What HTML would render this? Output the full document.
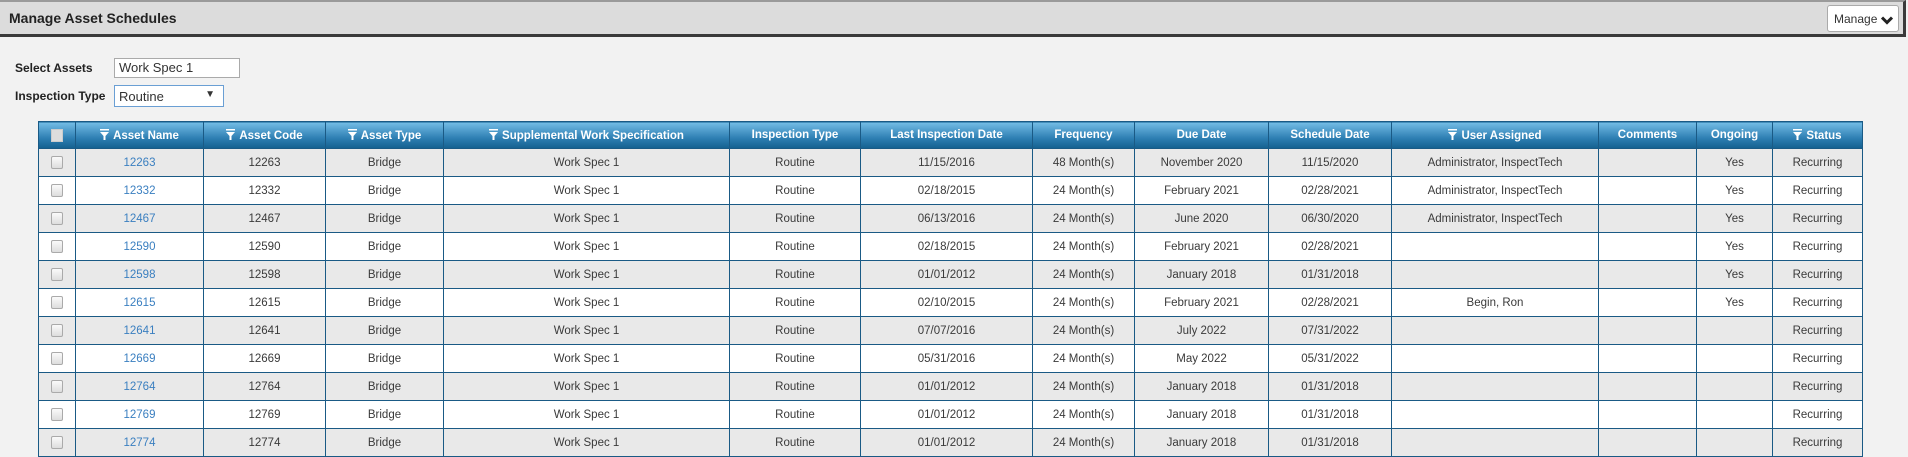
<!DOCTYPE html>
<html><head><meta charset="utf-8"><style>
*{box-sizing:border-box;margin:0;padding:0}
html,body{width:1908px;height:446px;overflow:hidden;background:#f2f2f2;font-family:"Liberation Sans",Arial,sans-serif;font-size:12px;color:#333}
.bar{position:absolute;left:0;top:0;width:1906px;height:37px;background:#dcdcdc;border-top:2px solid #9a9a9a;border-bottom:3px solid #3a3a3a;border-right:3px solid #3a3a3a}
.bar h1{position:absolute;left:9px;top:8px;font-size:14px;font-weight:bold;color:#222}
.btn{position:absolute;left:1827px;top:3px;width:72px;height:27px;background:#fff;border:1px solid #aaa;border-radius:3px;font-size:12px;color:#333;padding:6px 0 0 6px}
.btn svg{position:absolute;right:5px;top:10px}
.lbl{position:absolute;left:15px;font-weight:bold;font-size:12px;color:#222}
.inp{position:absolute;left:114px;background:#fff;border:1px solid #aaa;font-size:13px;padding:2px 4px}
table{position:absolute;left:38px;top:121px;border-collapse:collapse;table-layout:fixed;width:1824px}
th{height:27px;background:linear-gradient(#74bde6,#2e7fb3 60%,#14608f);color:#fff;font-weight:bold;font-size:11.5px;border:1px solid #1a5a85;text-align:center;white-space:nowrap}
td{height:28px;border:1px solid #1a5a85;text-align:center;font-size:11.5px;color:#3a3a3a;white-space:nowrap;overflow:hidden}
tr.g td{background:#e9e9e9}
tr.w td{background:#fff}
td a{color:#3a7fc0;text-decoration:none}
.cb{display:inline-block;width:12px;height:13px;border:1px solid #aaa;border-radius:2px;background:linear-gradient(#fafafa,#ddd);vertical-align:middle}
th .cb{border-color:#ccc;background:#ddd;border-radius:0}
.f{display:inline-block;vertical-align:-1px;margin-right:4px}
</style></head><body>
<div class="bar"><h1>Manage Asset Schedules</h1>
<div class="btn">Manage<svg width="12" height="9" viewBox="0 0 12 9"><path d="M1 1.5L6 6.5L11 1.5" stroke="#222" stroke-width="3" fill="none"/></svg></div></div>
<div class="lbl" style="top:61px">Select Assets</div>
<div class="inp" style="top:58px;width:126px;height:20px;padding-top:1px">Work Spec 1</div>
<div class="lbl" style="top:89px">Inspection Type</div>
<div class="inp" style="top:85px;width:110px;height:22px;border-color:#6a9fd4;padding-top:3px">Routine<span style="position:absolute;right:8px;top:3px;font-size:10px">▼</span></div>
<table>
<colgroup><col style="width:37px"><col style="width:128px"><col style="width:122px"><col style="width:118px"><col style="width:286px"><col style="width:131px"><col style="width:172px"><col style="width:102px"><col style="width:134px"><col style="width:123px"><col style="width:207px"><col style="width:98px"><col style="width:76px"><col style="width:90px"></colgroup>
<tr><th><span class="cb"></span></th>
<th><svg class="f" width="9" height="11" viewBox="0 0 9 11"><rect x="0" y="0" width="9" height="1.5" fill="#fff"/><path d="M0 3H9L5.5 7V11H3.5V7Z" fill="#fff"/></svg>Asset Name</th>
<th><svg class="f" width="9" height="11" viewBox="0 0 9 11"><rect x="0" y="0" width="9" height="1.5" fill="#fff"/><path d="M0 3H9L5.5 7V11H3.5V7Z" fill="#fff"/></svg>Asset Code</th>
<th><svg class="f" width="9" height="11" viewBox="0 0 9 11"><rect x="0" y="0" width="9" height="1.5" fill="#fff"/><path d="M0 3H9L5.5 7V11H3.5V7Z" fill="#fff"/></svg>Asset Type</th>
<th><svg class="f" width="9" height="11" viewBox="0 0 9 11"><rect x="0" y="0" width="9" height="1.5" fill="#fff"/><path d="M0 3H9L5.5 7V11H3.5V7Z" fill="#fff"/></svg>Supplemental Work Specification</th>
<th>Inspection Type</th><th>Last Inspection Date</th><th>Frequency</th><th>Due Date</th><th>Schedule Date</th>
<th><svg class="f" width="9" height="11" viewBox="0 0 9 11"><rect x="0" y="0" width="9" height="1.5" fill="#fff"/><path d="M0 3H9L5.5 7V11H3.5V7Z" fill="#fff"/></svg>User Assigned</th>
<th>Comments</th><th>Ongoing</th>
<th><svg class="f" width="9" height="11" viewBox="0 0 9 11"><rect x="0" y="0" width="9" height="1.5" fill="#fff"/><path d="M0 3H9L5.5 7V11H3.5V7Z" fill="#fff"/></svg>Status</th></tr>
<tr class="g"><td><span class="cb"></span></td><td><a>12263</a></td><td>12263</td><td>Bridge</td><td>Work Spec 1</td><td>Routine</td><td>11/15/2016</td><td>48 Month(s)</td><td>November 2020</td><td>11/15/2020</td><td>Administrator, InspectTech</td><td></td><td>Yes</td><td>Recurring</td></tr>
<tr class="w"><td><span class="cb"></span></td><td><a>12332</a></td><td>12332</td><td>Bridge</td><td>Work Spec 1</td><td>Routine</td><td>02/18/2015</td><td>24 Month(s)</td><td>February 2021</td><td>02/28/2021</td><td>Administrator, InspectTech</td><td></td><td>Yes</td><td>Recurring</td></tr>
<tr class="g"><td><span class="cb"></span></td><td><a>12467</a></td><td>12467</td><td>Bridge</td><td>Work Spec 1</td><td>Routine</td><td>06/13/2016</td><td>24 Month(s)</td><td>June 2020</td><td>06/30/2020</td><td>Administrator, InspectTech</td><td></td><td>Yes</td><td>Recurring</td></tr>
<tr class="w"><td><span class="cb"></span></td><td><a>12590</a></td><td>12590</td><td>Bridge</td><td>Work Spec 1</td><td>Routine</td><td>02/18/2015</td><td>24 Month(s)</td><td>February 2021</td><td>02/28/2021</td><td></td><td></td><td>Yes</td><td>Recurring</td></tr>
<tr class="g"><td><span class="cb"></span></td><td><a>12598</a></td><td>12598</td><td>Bridge</td><td>Work Spec 1</td><td>Routine</td><td>01/01/2012</td><td>24 Month(s)</td><td>January 2018</td><td>01/31/2018</td><td></td><td></td><td>Yes</td><td>Recurring</td></tr>
<tr class="w"><td><span class="cb"></span></td><td><a>12615</a></td><td>12615</td><td>Bridge</td><td>Work Spec 1</td><td>Routine</td><td>02/10/2015</td><td>24 Month(s)</td><td>February 2021</td><td>02/28/2021</td><td>Begin, Ron</td><td></td><td>Yes</td><td>Recurring</td></tr>
<tr class="g"><td><span class="cb"></span></td><td><a>12641</a></td><td>12641</td><td>Bridge</td><td>Work Spec 1</td><td>Routine</td><td>07/07/2016</td><td>24 Month(s)</td><td>July 2022</td><td>07/31/2022</td><td></td><td></td><td></td><td>Recurring</td></tr>
<tr class="w"><td><span class="cb"></span></td><td><a>12669</a></td><td>12669</td><td>Bridge</td><td>Work Spec 1</td><td>Routine</td><td>05/31/2016</td><td>24 Month(s)</td><td>May 2022</td><td>05/31/2022</td><td></td><td></td><td></td><td>Recurring</td></tr>
<tr class="g"><td><span class="cb"></span></td><td><a>12764</a></td><td>12764</td><td>Bridge</td><td>Work Spec 1</td><td>Routine</td><td>01/01/2012</td><td>24 Month(s)</td><td>January 2018</td><td>01/31/2018</td><td></td><td></td><td></td><td>Recurring</td></tr>
<tr class="w"><td><span class="cb"></span></td><td><a>12769</a></td><td>12769</td><td>Bridge</td><td>Work Spec 1</td><td>Routine</td><td>01/01/2012</td><td>24 Month(s)</td><td>January 2018</td><td>01/31/2018</td><td></td><td></td><td></td><td>Recurring</td></tr>
<tr class="g"><td><span class="cb"></span></td><td><a>12774</a></td><td>12774</td><td>Bridge</td><td>Work Spec 1</td><td>Routine</td><td>01/01/2012</td><td>24 Month(s)</td><td>January 2018</td><td>01/31/2018</td><td></td><td></td><td></td><td>Recurring</td></tr>
</table>
</body></html>
